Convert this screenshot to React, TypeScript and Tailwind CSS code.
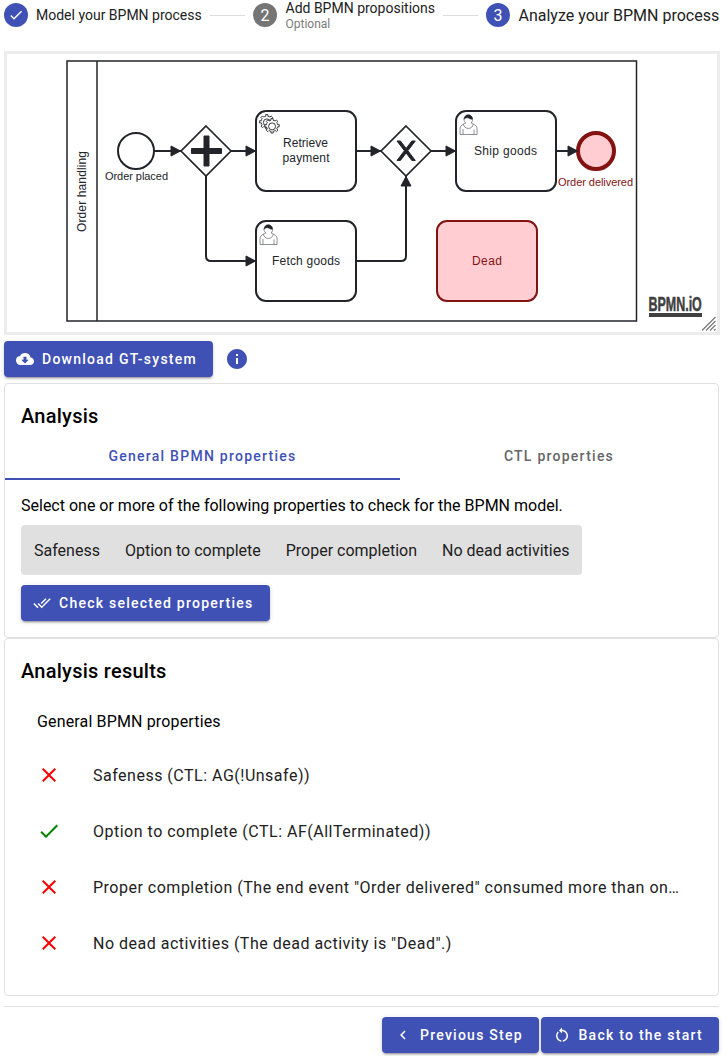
import React from "react";
import {
  MdCheck,
  MdChevronLeft,
  MdClose,
  MdCloudDownload,
  MdDoneAll,
  MdInfo,
  MdRestartAlt,
} from "react-icons/md";

const INK = "#22242a";
const RED = "#831311";
const PINK = "#ffcdd2";

const GEAR =
  "m 12,18 v -1.71335 c 0.352326,-0.0705 0.703932,-0.17838 1.047628,-0.32133 0.344416,-0.14465 0.665822,-0.32133 0.966377,-0.52145 l 1.19431,1.18005 1.567487,-1.57688 -1.195028,-1.18014 c 0.403376,-0.61394 0.683079,-1.29908 0.825447,-2.01824 l 1.622133,-0.01 v -2.2196 l -1.636514,0.01 c -0.07333,-0.35153 -0.178319,-0.70024 -0.323564,-1.04372 -0.145244,-0.34406 -0.321407,-0.6644 -0.522735,-0.96217 l 1.131035,-1.13631 -1.583305,-1.56293 -1.129598,1.13589 c -0.614052,-0.40108 -1.302883,-0.68093 -2.022633,-0.82247 l 0.0093,-1.61852 h -2.241173 l 0.0042,1.63124 c -0.353763,0.0736 -0.705369,0.17977 -1.049785,0.32371 -0.344415,0.14437 -0.665102,0.32092 -0.9635006,0.52046 l -1.1698628,-1.15823 -1.5667691,1.5792 1.1684265,1.15669 c -0.4026573,0.61283 -0.68308,1.29797 -0.8247287,2.01713 l -1.6588041,0.003 v 2.22174 l 1.6724648,-0.006 c 0.073327,0.35077 0.1797598,0.70243 0.3242851,1.04472 0.1452428,0.34448 0.3214064,0.6644 0.5227339,0.96066 l -1.1993431,1.19723 1.5840256,1.56011 1.1964668,-1.19348 c 0.6140517,0.40346 1.3028827,0.68232 2.0233517,0.82331 l 7.19e-4,1.69892 h 2.226848 z";

function Gears({ x, y }: { x: number; y: number }) {
  return (
    <g transform={`translate(${x} ${y})`} fill="#fff" stroke={INK} strokeWidth="0.9">
      <path d={GEAR} />
      <circle cx="10.9" cy="11.4" r="3.5" />
      <g transform="translate(5.2 4)">
        <path d={GEAR} />
        <circle cx="10.9" cy="11.4" r="3.5" />
      </g>
    </g>
  );
}

function Person({ x, y }: { x: number; y: number }) {
  return (
    <g transform={`translate(${x} ${y})`} fill="#fff" stroke={INK} strokeWidth="0.5">
      <path d="m 15,12 c 0.909,-0.845 1.594,-2.049 1.594,-3.385 0,-2.554 -1.805,-4.622 -4.357,-4.622 -2.552,0 -4.288,2.068 -4.288,4.622 0,1.348 0.974,2.562 1.896,3.405 -0.529,0.187 -5.669,2.097 -5.794,4.756 v 6.718 h 17 v -6.718 c 0,-2.298 -5.528,-4.595 -6.051,-4.776 z m -8,6 l 0,5.5 m 11,0 l 0,-5" />
      <path d="m 17.162,13.009 c 0,2.447 -2.158,4.431 -4.821,4.431 -2.665,0 -4.822,-1.981 -4.822,-4.431" />
      <path
        fill={INK}
        d="m 8.1,8.2 c 0,0 2.251,-2.358 4.274,-1.177 2.024,1.181 4.221,1.537 4.124,0.965 -0.098,-0.57 -0.117,-3.791 -4.191,-4.136 -3.572,0.001 -4.208,3.67 -4.207,4.348 z"
      />
    </g>
  );
}

function Flow({ d, head }: { d: string; head: string }) {
  return (
    <g>
      <path d={d} fill="none" stroke={INK} strokeWidth="2" />
      <path d={head} fill={INK} stroke={INK} strokeWidth="1" />
    </g>
  );
}

function Diagram() {
  return (
    <svg
      className="block"
      width="710"
      height="278"
      viewBox="7 54 710 278"
      fontFamily="'Liberation Sans', Arial, sans-serif"
      fontSize="12"
      textAnchor="middle"
    >
      <rect x="67" y="61" width="569.5" height="260" fill="#fff" stroke={INK} strokeWidth="1.5" />
      <path d="M97 61V321" stroke={INK} strokeWidth="1.5" />
      <text transform="translate(86 191.500) rotate(-90)" textLength="81" fill={INK}>
        Order handling
      </text>

      <circle cx="136" cy="151" r="18" fill="#fff" stroke={INK} strokeWidth="2" />
      <text x="136.500" y="180" fontSize="11" textLength="63" fill={INK}>
        Order placed
      </text>

      <Flow d="M154 151H181" head="M171 146L180.500 151L171 156Z" />
      <Flow d="M231 151H256" head="M246 146L255.500 151L246 156Z" />
      <Flow d="M206 176V256Q206 261 211 261H256" head="M246 256L255.500 261L246 266Z" />
      <Flow d="M356 151H381" head="M371 146L380.500 151L371 156Z" />
      <Flow d="M356 261H401Q406 261 406 256V176" head="M401 186L406 176.500L411 186Z" />
      <Flow d="M431 151H456" head="M446 146L455.500 151L446 156Z" />

      <g fill="#fff" stroke={INK} strokeWidth="2">
        <path d="M206 126L231 151L206 176L181 151Z" strokeWidth="1.7" />
        <path d="M406 126L431 151L406 176L381 151Z" strokeWidth="1.7" />
        <rect x="256" y="111" width="100" height="80" rx="10" />
        <rect x="256" y="221" width="100" height="80" rx="10" />
        <rect x="456" y="111" width="100" height="80" rx="10" />
      </g>
      <path
        fill={INK}
        stroke={INK}
        d="m 204,136 0,12.5 -12.5,0 0,5 12.5,0 0,12.5 5,0 0,-12.5 12.5,0 0,-5 -12.5,0 0,-12.5 -5,0 z"
      />
      <path
        fill={INK}
        stroke={INK}
        d="m 397,141 7.42857,9.71429 -7.42857,9.71428 3.42857,0 5.71429,-7.46429 5.71428,7.46429 3.42858,0 -7.42858,-9.71428 7.42858,-9.71429 -3.42858,0 -5.71428,7.4643 -5.71429,-7.4643 -3.42857,0 z"
      />
      <Gears x={256} y={111} />
      <Person x={256} y={221} />
      <Person x={456} y={111} />

      <rect x="437" y="221" width="100" height="80" rx="10" fill={PINK} stroke={RED} strokeWidth="2" />
      <circle cx="596" cy="151" r="18" fill={PINK} stroke={RED} strokeWidth="4" />
      <Flow d="M556 151H577" head="M568 146L577.500 151L568 156Z" />

      <g fill={INK}>
        <text x="305.500" y="147" textLength="45">Retrieve</text>
        <text x="306" y="162" textLength="47">payment</text>
        <text x="306" y="265" textLength="68">Fetch goods</text>
        <text x="505.500" y="155" textLength="63">Ship goods</text>
      </g>
      <g fill={RED}>
        <text x="487" y="265" textLength="30">Dead</text>
        <text x="595.500" y="186" fontSize="11" textLength="75">Order delivered</text>
      </g>

      <g fill="#404040">
        <text
          transform="translate(648.500 310.500) scale(0.62 1)"
          fontSize="20.500"
          fontWeight="700"
          stroke="#404040"
          strokeWidth="0.5"
          textAnchor="start"
          textLength="86"
          lengthAdjust="spacingAndGlyphs"
        >
          BPMN.iO
        </text>
        <rect x="649" y="313" width="53" height="4" />
      </g>
      <path
        d="M702 330.500L715.500 317M706 330.500L715.500 321M710 330.500L715.500 325M714 330.500L715.500 329"
        stroke="#777"
        strokeWidth="1.2"
      />
    </svg>
  );
}

function Badge({ color, children }: { color: string; children: React.ReactNode }) {
  return (
    <span className={`flex size-6 shrink-0 items-center justify-center rounded-full pt-px text-base text-white ${color}`}>
      {children}
    </span>
  );
}

function Button({
  icon,
  className,
  children,
}: {
  icon: React.ReactNode;
  className: string;
  children: React.ReactNode;
}) {
  return (
    <button
      className={`flex h-9 shrink-0 items-center rounded bg-[#3f51b5] text-sm font-medium tracking-[1.25px] whitespace-nowrap text-white shadow-[0_3px_1px_-2px_rgba(0,0,0,0.2),0_2px_2px_rgba(0,0,0,0.14),0_1px_5px_rgba(0,0,0,0.12)] ${className}`}
    >
      {icon}
      {children}
    </button>
  );
}

const results = [
  { ok: false, text: "Safeness (CTL: AG(!Unsafe))" },
  { ok: true, text: "Option to complete (CTL: AF(AllTerminated))" },
  { ok: false, text: 'Proper completion (The end event "Order delivered" consumed more than on…' },
  { ok: false, text: 'No dead activities (The dead activity is "Dead".)' },
];

export default function App() {
  return (
    <div className="h-[1056px] w-[726px] overflow-hidden bg-white pl-1 font-['Roboto',sans-serif] text-black">
      <header className="flex h-[51px] w-[716px] items-start text-[#212121]">
        <div className="flex h-[30px] items-center">
          <Badge color="bg-[#3f51b5]">
            <MdCheck size={16} className="mb-px" />
          </Badge>
          <span className="ml-2 w-[166px] text-sm whitespace-nowrap">Model your BPMN process</span>
          <span className="mt-px ml-2 h-px w-[35px] bg-[#dcdcdc]" />
        </div>
        <div className="flex h-[30px] items-center pl-2">
          <Badge color="bg-[#757575]">2</Badge>
          <div className="ml-2 w-[150px] pt-0.5 pl-[0.5px] whitespace-nowrap">
            <div className="text-sm leading-4">Add BPMN propositions</div>
            <div className="text-xs leading-4 text-[#7b7b7b]">Optional</div>
          </div>
          <span className="mt-px ml-2 h-px w-[35px] bg-[#dcdcdc]" />
        </div>
        <div className="flex h-[30px] items-center pl-2">
          <Badge color="bg-[#3f51b5]">3</Badge>
          <span className="ml-[8.5px] pt-0.5 text-base whitespace-nowrap">Analyze your BPMN process</span>
        </div>
      </header>

      <div className="h-[284px] w-[716px] border-3 border-[#ececec]">
        <Diagram />
      </div>

      <div className="flex items-center pt-[6px]">
        <Button className="w-[209px] pl-3" icon={<MdCloudDownload size={18} className="mr-2" />}>
          Download GT-system
        </Button>
        <MdInfo size={24} className="ml-3 text-[#3f51b5]" />
      </div>

      <section className="mt-[6px] h-[255px] w-[715px] rounded border border-[#e0e0e0]">
        <h2 className="px-4 pt-4 text-xl leading-8 font-medium tracking-[0.25px]">Analysis</h2>
        <div className="flex h-12 text-sm font-medium tracking-[1.25px]">
          <div className="flex w-[395px] items-center justify-center border-b-2 border-[#3f51b5] pt-0.5 text-[#3f51b5]">
            General BPMN properties
          </div>
          <div className="flex flex-1 items-center justify-center border-b-2 border-transparent pt-0.5 text-[#666]">
            CTL properties
          </div>
        </div>
        <div className="px-4 pt-[14px]">
          <p className="text-base">Select one or more of the following properties to check for the BPMN model.</p>
          <div className="mt-[7px] flex h-[50px] w-[561px] items-center gap-[25px] rounded bg-[#e0e0e0] px-[13px] pt-0.5 text-base whitespace-nowrap text-[#212121]">
            <span>Safeness</span>
            <span>Option to complete</span>
            <span>Proper completion</span>
            <span>No dead activities</span>
          </div>
          <Button className="mt-[10px] w-[249px] pl-3" icon={<MdDoneAll size={18} className="mr-2" />}>
            Check selected properties
          </Button>
        </div>
      </section>

      <section className="h-[358px] w-[715px] rounded border border-[#e0e0e0] px-4 pt-4">
        <h2 className="text-xl leading-8 font-medium tracking-[0.25px]">Analysis results</h2>
        <h3 className="mt-[23px] pl-4 text-base tracking-[0.15px]">General BPMN properties</h3>
        <ul className="mt-[13px] px-4">
          {results.map((r) => (
            <li key={r.text} className="flex h-14 items-center">
              {r.ok ? (
                <MdCheck size={24} className="shrink-0 text-[#008000]" />
              ) : (
                <MdClose size={24} className="shrink-0 text-[#ff0000]" />
              )}
              <span className="ml-8 pt-0.5 text-base tracking-[0.5px] whitespace-nowrap text-[#212121]">{r.text}</span>
            </li>
          ))}
        </ul>
      </section>

      <footer className="mt-[10px] flex w-[715px] justify-end gap-0.5 border-t border-[#e0e0e0] pt-[10px]">
        <Button className="w-[157px] pl-3" icon={<MdChevronLeft size={18} className="mr-2" />}>
          Previous Step
        </Button>
        <Button className="w-[178px] pl-[11.5px]" icon={<MdRestartAlt size={18} className="mr-2" />}>
          Back to the start
        </Button>
      </footer>
    </div>
  );
}
